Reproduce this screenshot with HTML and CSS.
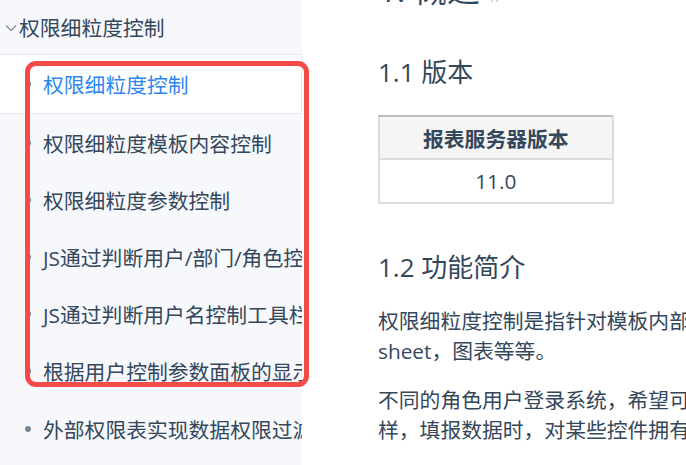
FILE: index.html
```html
<!DOCTYPE html>
<html lang="zh-CN">
<head>
  <meta charset="UTF-8" />
  <title>权限细粒度控制</title>
  <link rel="stylesheet" href="styles.css">
</head>
<body>

  <div class="page">
    <aside class="sidebar">
      <div class="group-title">
        <svg class="chevron" width="12" height="8" viewBox="0 0 12 8"><path d="M1 1.5 L6 6.5 L11 1.5" fill="none" stroke="#8a93a0" stroke-width="1.4"/></svg>
        权限细粒度控制
      </div>
      <ul class="nav">
        <li class="active">权限细粒度控制</li>
        <li>权限细粒度模板内容控制</li>
        <li>权限细粒度参数控制</li>
        <li>JS通过判断用户/部门/角色控制按钮显示</li>
        <li>JS通过判断用户名控制工具栏按钮</li>
        <li>根据用户控制参数面板的显示</li>
        <li class="last">外部权限表实现数据权限过滤</li>
      </ul>
    </aside>

    <main class="content">
      <h1>1. 概述 <span class="anchor">#</span></h1>

      <h2>1.1 版本</h2>
      <table class="version">
        <thead>
          <tr><th>报表服务器版本</th></tr>
        </thead>
        <tbody>
          <tr><td>11.0</td></tr>
        </tbody>
      </table>

      <h2 class="second">1.2 功能简介</h2>
      <p>权限细粒度控制是指针对模板内部的单元格、控件、sheet，图表等等。</p>
      <p>不同的角色用户登录系统，希望可以看到不同页面模样，填报数据时，对某些控件拥有不同的权限。</p>
    </main>

    <!-- annotation frame drawn over the sidebar -->
    <div class="highlight"></div>
  </div>

</body>
</html>
```

FILE: styles.css
```css
* {
  box-sizing: border-box;
}

html, body {
  margin: 0;
  padding: 0;
}

body {
  font-family: "Open Sans", "Noto Sans CJK SC", sans-serif;
  color: #34475b;
  background: #fff;
  overflow: hidden;
  height: 465px;
}

.page {
  position: relative;
  display: flex;
  height: 465px;
}

.sidebar {
  width: 302px;
  flex-shrink: 0;
  background: #f7f8fb;
  overflow: hidden;
}

.group-title {
  display: flex;
  align-items: center;
  height: 55px;
  padding-left: 5px;
  font-size: 20.8px;
  white-space: nowrap;
  border-bottom: 1px solid #e6e8ee;
}

.chevron {
  margin-right: 2px;
  margin-top: 2px;
}

.nav {
  list-style: none;
  margin: 0;
  padding: 0;
}

.nav li {
  position: relative;
  display: flex;
  align-items: center;
  height: 57px;
  padding-left: 43px;
  font-size: 20.8px;
  white-space: nowrap;
  overflow: hidden;
}

.nav li::before {
  content: "";
  position: absolute;
  left: 25px;
  top: 26px;
  width: 6px;
  height: 6px;
  border-radius: 50%;
  background: #7c8694;
}

.nav li.active {
  height: 59px;
  background: #fff;
  color: #2d86f0;
  border-bottom: 1px solid #e6e8ee;
  border-right: 1px solid #e6e8ee;
}

.nav li.last {
  margin-top: 1px;
}

.highlight {
  position: absolute;
  left: 25px;
  top: 61px;
  width: 284px;
  height: 326px;
  border: 5px solid #f44a48;
  border-radius: 11px;
}

.content {
  flex: 1;
  padding-left: 76px;
  white-space: nowrap;
  overflow: hidden;
}

h1 {
  margin: -32px 0 0;
  font-size: 33px;
  font-weight: 400;
  line-height: 44px;
}

.anchor {
  color: #c5cbd3;
  font-size: 22px;
}

h2 {
  margin: 39px 0 0;
  font-size: 26px;
  font-weight: 400;
  line-height: 36px;
}

h2.second {
  margin-top: 45px;
}

.version {
  margin-top: 25px;
  border-collapse: collapse;
  border-top: 2px solid #bdbdbd;
  font-size: 20.8px;
}

.version th,
.version td {
  padding: 0 43px;
  text-align: center;
  border: 2px solid #dcdcdc;
}

.version thead th {
  height: 43px;
  background: #f5f5f5;
  font-weight: 700;
  border-top-color: #bdbdbd;
  border-bottom-width: 1px;
}

.version td {
  height: 44px;
}

p {
  margin: 21px 0 0;
  width: 490px;
  white-space: normal;
  font-size: 20.8px;
  line-height: 30px;
}

p + p {
  margin-top: 19px;
}
```
